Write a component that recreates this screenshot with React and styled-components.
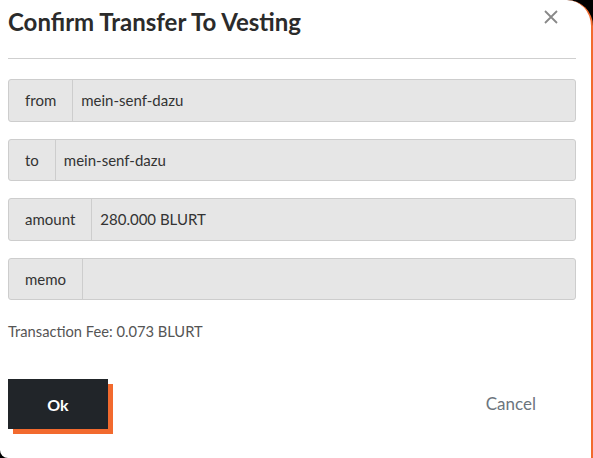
import React from "react";
import styled, { createGlobalStyle } from "styled-components";

const Global = createGlobalStyle`
  html, body { margin: 0; padding: 0; background: #000; }
  body { font-family: Lato, "Noto Sans", sans-serif; }
`;

const Modal = styled.div`
  box-sizing: border-box;
  width: 593px;
  height: 458px;
  background: #fff;
  border-right: 2px solid #f26a2e;
  border-top-right-radius: 26px;
  border-bottom-left-radius: 8px;
  padding: 0 15px 0 8px;
  display: flex;
  flex-direction: column;
  overflow: hidden;
`;

const Header = styled.div`
  display: flex;
  align-items: flex-start;
  justify-content: space-between;
  padding-top: 7px;
  height: 51px;
  border-bottom: 1px solid #cfcfcf;
`;

const Title = styled.h1`
  margin: 0;
  font-size: 24px;
  font-weight: 700;
  color: #2b2b2b;
`;

const Close = styled.button`
  border: 0;
  background: none;
  padding: 0;
  margin: 3px 18px 0 0;
  width: 14px;
  height: 14px;
  cursor: pointer;
  svg { display: block; }
`;

const Fields = styled.div`
  display: flex;
  flex-direction: column;
  gap: 17px;
  margin-top: 20px;
`;

const Group = styled.div`
  display: flex;
  height: 42.5px;
  box-sizing: border-box;
  background: #e6e6e6;
  border: 1px solid #cdcdcd;
  border-radius: 3px;
  font-size: 15px;
  color: #333;
`;

const Label = styled.span`
  display: flex;
  align-items: center;
  padding: 0 16px;
  border-right: 1px solid #cdcdcd;
`;

const Value = styled.span`
  display: flex;
  align-items: center;
  padding: 0 8px;
  flex: 1;
`;

const Fee = styled.div`
  margin-top: 22px;
  font-size: 14.7px;
  color: #555;
`;

const Actions = styled.div`
  display: flex;
  align-items: center;
  justify-content: space-between;
  margin-top: 39px;
`;

const OkButton = styled.button`
  width: 100px;
  height: 50px;
  border: 0;
  background: #212529;
  color: #fff;
  font-family: inherit;
  font-size: 16px;
  font-weight: 700;
  box-shadow: 5px 5px 0 #f26a2e;
  cursor: pointer;
`;

const CancelButton = styled.button`
  border: 0;
  background: none;
  padding: 0;
  color: #6c757d;
  font-family: inherit;
  font-size: 17px;
  margin: 0 40px 2px 0;
  cursor: pointer;
`;

const rows = [
  { label: "from", value: "mein-senf-dazu" },
  { label: "to", value: "mein-senf-dazu" },
  { label: "amount", value: "280.000 BLURT" },
  { label: "memo", value: "" },
];

export default function App() {
  return (
    <>
      <Global />
      <Modal>
        <Header>
          <Title>Confirm Transfer To Vesting</Title>
          <Close aria-label="close">
            <svg width="14" height="14" viewBox="0 0 14 14">
              <path d="M1 1L13 13M13 1L1 13" stroke="#888" strokeWidth="1.8" />
            </svg>
          </Close>
        </Header>
        <Fields>
          {rows.map((r) => (
            <Group key={r.label}>
              <Label>{r.label}</Label>
              <Value>{r.value}</Value>
            </Group>
          ))}
        </Fields>
        <Fee>Transaction Fee: 0.073 BLURT</Fee>
        <Actions>
          <OkButton>Ok</OkButton>
          <CancelButton>Cancel</CancelButton>
        </Actions>
      </Modal>
    </>
  );
}
